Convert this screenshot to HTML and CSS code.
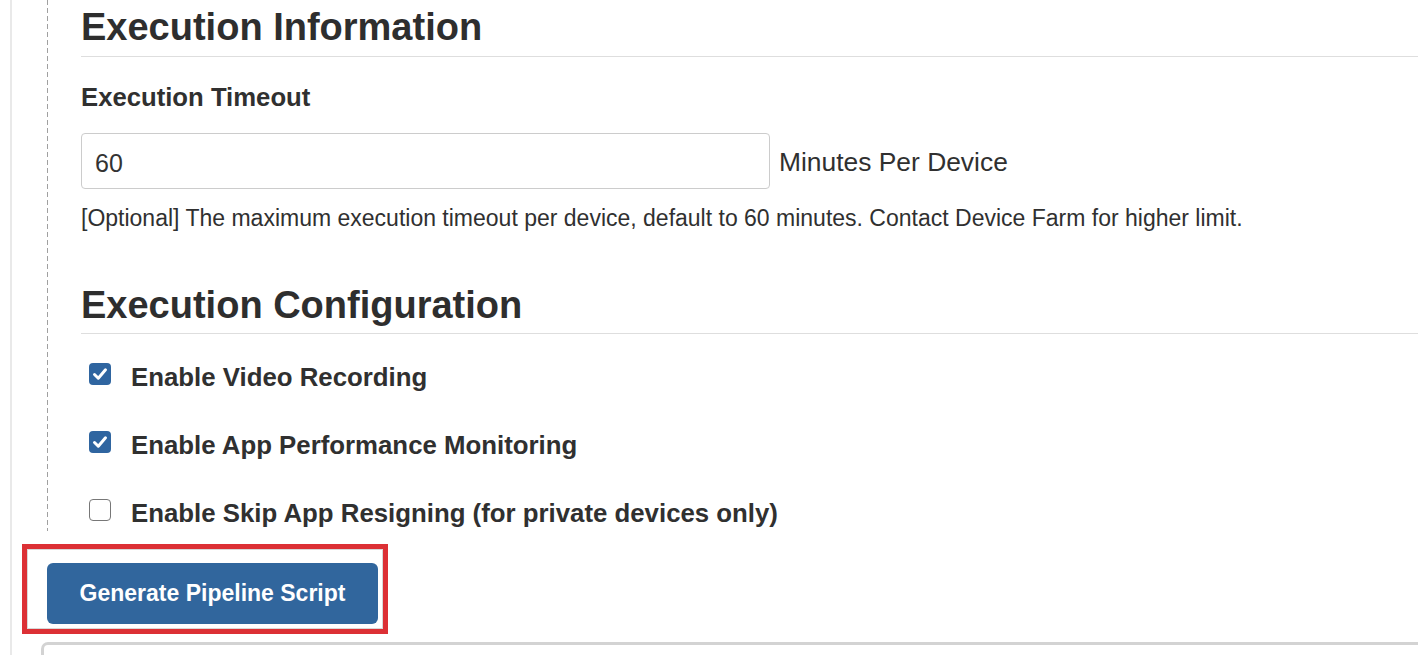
FILE: index.html
```html
<!DOCTYPE html>
<html lang="en">
<head>
<meta charset="utf-8">
<title>Execution settings</title>
<link rel="stylesheet" href="styles.css">
</head>
<body>
<div class="panel">
  <div class="section">
    <h2 class="heading first">Execution Information</h2>
    <div class="label">Execution Timeout</div>
    <div class="input-row">
      <input class="text-input" type="text" value="60">
      <span class="unit">Minutes Per Device</span>
    </div>
    <div class="help">[Optional] The maximum execution timeout per device, default to 60 minutes. Contact Device Farm for higher limit.</div>

    <h2 class="heading second">Execution Configuration</h2>
    <div class="check-row">
      <span class="box checked"><svg viewBox="0 0 22 22" width="22" height="22"><path d="M5.5 11.5 L9.3 15.2 L16.5 6.8" fill="none" stroke="#fff" stroke-width="3" stroke-linecap="round" stroke-linejoin="round"/></svg></span>
      <span class="check-label">Enable Video Recording</span>
    </div>
    <div class="check-row">
      <span class="box checked"><svg viewBox="0 0 22 22" width="22" height="22"><path d="M5.5 11.5 L9.3 15.2 L16.5 6.8" fill="none" stroke="#fff" stroke-width="3" stroke-linecap="round" stroke-linejoin="round"/></svg></span>
      <span class="check-label">Enable App Performance Monitoring</span>
    </div>
    <div class="check-row">
      <span class="box"></span>
      <span class="check-label">Enable Skip App Resigning (for private devices only)</span>
    </div>
  </div>
  <div class="highlight">
    <div class="highlight-inner">
      <button class="btn" type="button">Generate Pipeline Script</button>
    </div>
  </div>
  <div class="output-box"></div>
</div>
</body>
</html>
```
FILE: styles.css
```css
html, body {
  margin: 0;
  padding: 0;
  background: #fff;
  overflow: hidden;
}
body {
  font-family: "Liberation Sans", Arial, Helvetica, sans-serif;
  color: #303030;
  width: 1418px;
  height: 655px;
}
.panel {
  margin-left: 10px;
  border-left: 2px solid #e9e9e9;
  min-height: 700px;
}
.section {
  margin-left: 35px;
  padding-left: 34px;
  padding-bottom: 3px;
  background-image: repeating-linear-gradient(to bottom, #a0a0a0 0 5px, transparent 5px 8px);
  background-repeat: no-repeat;
  background-size: 1px 100%;
  background-position: left top;
}
.heading {
  margin: 0;
  font-size: 38px;
  line-height: 44px;
  font-weight: bold;
  color: #2e2e2e;
  border-bottom: 1px solid #dedede;
}
.heading.first {
  padding-top: 5px;
  padding-bottom: 7px;
}
.heading.second {
  margin-top: 51px;
  padding-bottom: 6px;
}
.label {
  margin-top: 25px;
  font-size: 25.7px;
  line-height: 30px;
  font-weight: bold;
}
.input-row {
  margin-top: 21px;
  display: flex;
  align-items: center;
  gap: 9px;
}
.text-input {
  box-sizing: border-box;
  width: 689px;
  height: 56px;
  margin: 0;
  border: 1px solid #cccccc;
  border-radius: 4px;
  padding: 4px 0 0 13px;
  font-family: "Liberation Sans", Arial, sans-serif;
  font-size: 25px;
  color: #333;
  background: #fff;
  outline: none;
}
.unit {
  font-size: 26.4px;
  line-height: 30px;
  padding-top: 1px;
}
.help {
  margin-top: 15px;
  font-size: 23px;
  line-height: 28px;
}
.check-row {
  display: flex;
  align-items: flex-start;
  gap: 20px;
  margin-top: 38px;
  padding-left: 8px;
  height: 30px;
}
.heading.second + .check-row {
  margin-top: 28px;
}
.box {
  box-sizing: border-box;
  width: 22px;
  height: 22px;
  flex: none;
  border-radius: 4px;
  border: 1.5px solid #777;
  background: #fff;
  display: block;
  margin-top: 1px;
}
.box.checked {
  border: none;
  background: #2f65a0;
}
.box svg {
  display: block;
}
.check-label {
  font-size: 25.8px;
  line-height: 30px;
  font-weight: bold;
}
.highlight {
  margin-top: 13px;
  margin-left: 10px;
  display: inline-block;
  border: 5px solid #dc3035;
}
.highlight-inner {
  border: 1px solid #d8d8d8;
  padding: 13px 4px 4px 19px;
}
.btn {
  display: block;
  box-sizing: border-box;
  width: 331px;
  height: 61px;
  margin: 0;
  padding: 0;
  border: none;
  border-radius: 6px;
  background: #31669d;
  color: #fff;
  font-family: "Liberation Sans", Arial, sans-serif;
  font-size: 23px;
  font-weight: bold;
  text-align: center;
}
.output-box {
  margin-top: 8px;
  margin-left: 29px;
  margin-right: -20px;
  height: 80px;
  border: 3px solid #d3d3d3;
  border-radius: 7px;
}
```
